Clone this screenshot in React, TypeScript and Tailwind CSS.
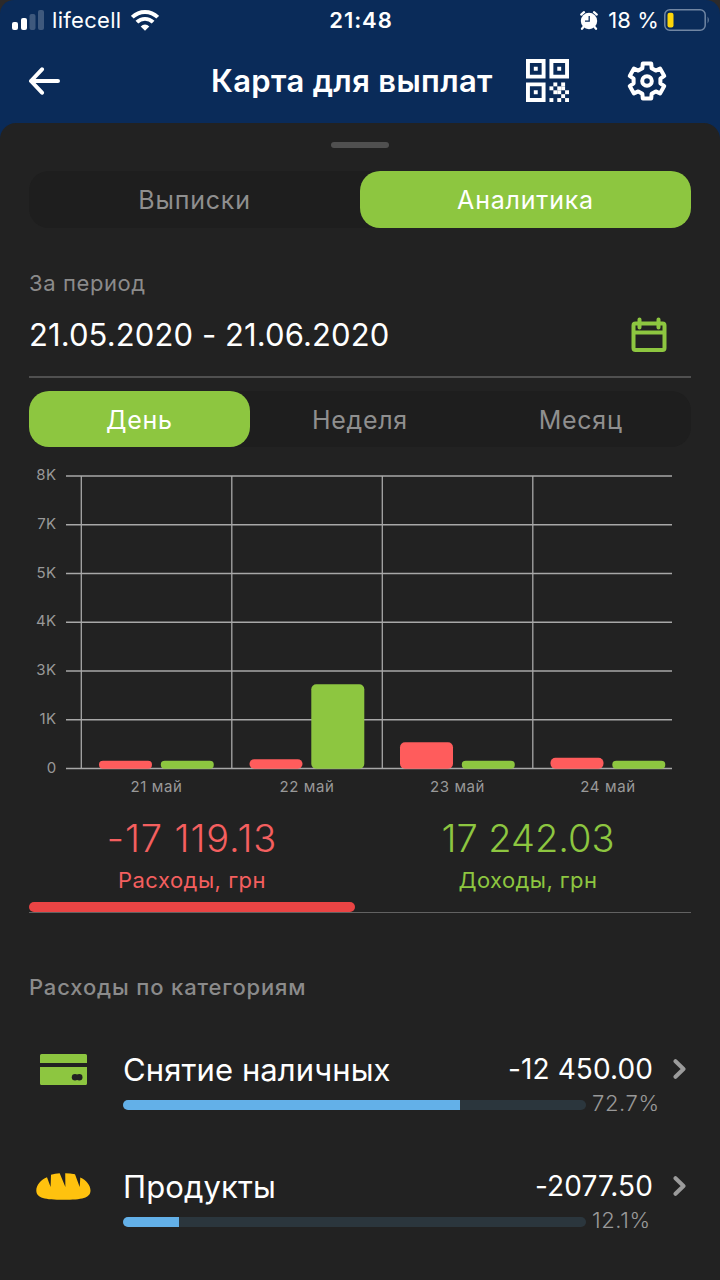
import { useState } from 'react';
import { clsx } from 'clsx';

interface DayStats {
  label: string;
  expense: number;
  income: number;
}

interface Category {
  id: string;
  name: string;
  amount: string;
  percent: number;
  icon: React.ReactNode;
}

// Bar heights in px
const days: DayStats[] = [
  { label: '21 май', expense: 8, income: 8 },
  { label: '22 май', expense: 9.5, income: 84.5 },
  { label: '23 май', expense: 26.5, income: 8 },
  { label: '24 май', expense: 11, income: 8 },
];

const yLabels = ['8K', '7K', '5K', '4K', '3K', '1K', '0'];

function SignalIcon() {
  return (
    <svg width="32" height="20" viewBox="0 0 32 20" fill="#fff">
      <rect x="0" y="12" width="6" height="8" rx="2" />
      <rect x="9" y="8" width="6" height="12" rx="2" />
      <rect x="17.5" y="4" width="6" height="16" rx="2" opacity="0.22" />
      <rect x="26" y="0" width="6" height="20" rx="2" opacity="0.22" />
    </svg>
  );
}

function WifiIcon() {
  return (
    <svg width="28" height="21" viewBox="0 0 28 21" fill="none" stroke="#fff" strokeWidth="3.9">
      <path d="M1.3 7.2a18 18 0 0 1 25.4 0" />
      <path d="M5.9 12.2a11.5 11.5 0 0 1 16.2 0" />
      <path d="M14 20.8l-4.3-4.4a6 6 0 0 1 8.6 0z" fill="#fff" stroke="none" />
    </svg>
  );
}

function AlarmIcon() {
  return (
    <svg width="18" height="19" viewBox="0 0 18 19">
      <circle cx="9" cy="10" r="8.2" fill="#fff" />
      <path d="M1.2 3.6L4 1.2M16.8 3.6L14 1.2M3.4 16L2 17.8M14.6 16L16 17.8" stroke="#fff" strokeWidth="2.2" strokeLinecap="round" />
      <path d="M9.2 5v5.2H5" fill="none" stroke="#0a2b59" strokeWidth="1.3" />
    </svg>
  );
}

function BatteryIcon() {
  return (
    <svg width="46" height="22" viewBox="0 0 46 22">
      <rect x="0.8" y="0.8" width="40.4" height="20.4" rx="5" fill="none" stroke="#7186a3" strokeWidth="1.5" />
      <rect x="3.5" y="3.8" width="6" height="14.6" rx="2" fill="#fdd60a" />
      <path d="M43.6 7.5q2.4 3.5 0 7z" fill="#7186a3" />
    </svg>
  );
}

function BackIcon() {
  return (
    <svg width="32" height="28" viewBox="0 0 32 28" fill="none" stroke="#fff" strokeWidth="4" strokeLinecap="round" strokeLinejoin="round">
      <path d="M30 14H3M14 2.3L3 14l11 11.7" />
    </svg>
  );
}

const qrModules = ['.X.X.', 'X.XX.', '.XX.X', '...X.', 'X.X.X'];

function QrIcon() {
  return (
    <svg width="43" height="43" viewBox="0 0 11 11" fill="none" stroke="#fff" strokeWidth="1">
      <path d="M.5.5h4v4h-4zM6.5.5h4v4h-4zM.5 6.5h4v4h-4z" />
      <path d="M2 2h1v1H2zM8 2h1v1H8zM2 8h1v1H2z" fill="#fff" stroke="none" />
      {qrModules.map((row, y) =>
        row.split('').map((cell, x) =>
          cell === 'X' ? <rect key={`${x}-${y}`} x={6 + x} y={6 + y} width="1" height="1" fill="#fff" stroke="none" /> : null
        )
      )}
    </svg>
  );
}

// Six teeth, each one a base-tip-tip-base run of points
const gearPoints = [0, 60, 120, 180, 240, 300]
  .flatMap((tooth) =>
    [[-20, 13.6], [-13.5, 18], [13.5, 18], [20, 13.6]].map(([offset, radius]) => {
      const angle = ((tooth + offset) * Math.PI) / 180;
      return `${(20 + radius * Math.sin(angle)).toFixed(2)},${(20 - radius * Math.cos(angle)).toFixed(2)}`;
    })
  )
  .join(' ');

function GearIcon() {
  return (
    <svg width="40" height="40" viewBox="0 0 40 40" fill="none" stroke="#fff" strokeWidth="4" strokeLinejoin="round">
      <polygon points={gearPoints} />
      <circle cx="20" cy="20" r="4.8" />
    </svg>
  );
}

function CalendarIcon() {
  return (
    <svg width="36" height="36" viewBox="0 0 36 36" fill="none" stroke="#8dc640" strokeWidth="4">
      <rect x="2.5" y="6.5" width="31" height="26.5" rx="2" />
      <path d="M2.5 15.5h31" />
      <path d="M8.5 2.5v8M27.5 2.5v8" strokeLinecap="round" />
    </svg>
  );
}

function CardIcon() {
  return (
    <svg width="47" height="31" viewBox="0 0 47 31" fill="#8dc640">
      <path d="M1.5 0h44A1.5 1.5 0 0 1 47 1.5V9H0V1.5A1.5 1.5 0 0 1 1.5 0z" />
      <path d="M0 13h47v16.5a1.5 1.5 0 0 1-1.5 1.5h-44A1.5 1.5 0 0 1 0 29.5z" />
      <circle cx="35" cy="23.3" r="3.2" fill="#222" />
      <circle cx="39.3" cy="23.3" r="3.2" fill="#222" />
    </svg>
  );
}

function BreadIcon() {
  return (
    <svg width="55" height="27" viewBox="0 0 55 27" fill="#ffc20e">
      <path d="M11 4.2L14.6 14 15 1.8Q19 .5 23.7.3L29.4 14 29.2.2Q34 .2 39 1.3L43.7 14 44.3 4.5C50 7 54.5 12 54.5 17.5 54.5 25 46 26.8 27.5 26.8S.3 25 .3 17.5C.3 12 5 6.5 11 4.2z" />
    </svg>
  );
}

function ChevronIcon() {
  return (
    <svg width="14" height="22" viewBox="0 0 14 22" fill="none" stroke="#9b9b9b" strokeWidth="4" strokeLinecap="round" strokeLinejoin="round">
      <path d="M2.5 3.2l8 7.8-8 7.8" />
    </svg>
  );
}

const categories: Category[] = [
  { id: 'cash', name: 'Снятие наличных', amount: '-12 450.00', percent: 72.7, icon: <CardIcon /> },
  { id: 'food', name: 'Продукты', amount: '-2077.50', percent: 12.1, icon: <BreadIcon /> },
];

interface SegmentedProps {
  items: string[];
  active: string;
  onChange: (item: string) => void;
  className?: string;
}

function Segmented({ items, active, onChange, className }: SegmentedProps) {
  return (
    <div className={clsx('flex rounded-[20px] bg-[#1e1e1e]', className)}>
      {items.map((item) => (
        <button
          key={item}
          onClick={() => onChange(item)}
          className={clsx(
            'flex-1 rounded-[20px] pt-0.5 text-[25px]',
            item === active ? 'bg-[#8dc640] text-white' : 'text-[#8f8f8f]'
          )}
        >
          {item}
        </button>
      ))}
    </div>
  );
}

function Chart() {
  const rowHeight = 48.75;
  const colWidth = 150.5;

  return (
    <svg width="662" height="340" viewBox="29 460 662 340" className="block" fontSize="15" letterSpacing="0.6">
      {/* Grid */}
      {yLabels.map((label, i) => (
        <g key={label}>
          <text x="56.5" y={480 + i * rowHeight} textAnchor="end" fill="#999" letterSpacing="0.4">
            {label}
          </text>
          <path d={`M66 ${476 + i * rowHeight}H672`} stroke="#a8a8a8" strokeWidth="1.3" />
        </g>
      ))}
      {days.map((day, i) => (
        <path key={day.label} d={`M${81.3 + i * colWidth} 476V768.5`} stroke="#a8a8a8" strokeWidth="1.3" />
      ))}

      {/* Bars */}
      {days.map((day, i) => (
        <g key={day.label}>
          <rect x={99 + i * colWidth} y={768.7 - day.expense} width="53" height={day.expense} rx={Math.min(5, day.expense / 2)} fill="#ff5c5c" />
          <rect x={160.8 + i * colWidth} y={768.7 - day.income} width="53" height={day.income} rx={Math.min(5, day.income / 2)} fill="#8dc640" />
          <text x={156.5 + i * colWidth} y="791.5" textAnchor="middle" fill="#999">
            {day.label}
          </text>
        </g>
      ))}
    </svg>
  );
}

export default function App() {
  const [tab, setTab] = useState('Аналитика');
  const [range, setRange] = useState('День');

  return (
    <div className="h-[1280px] w-[720px] overflow-hidden bg-[#2c2a2a] font-['Inter','Noto_Sans',sans-serif] leading-none">
      <div className="flex h-full flex-col rounded-t-[14px] bg-[#0a2b59]">
        {/* Status bar */}
        <div className="grid h-10 shrink-0 grid-cols-3 items-center pr-[10px] pl-3 text-[22px] text-white">
          <div className="flex items-center">
            <SignalIcon />
            <span className="mr-[10px] ml-2 tracking-[0.3px]">lifecell</span>
            <WifiIcon />
          </div>
          <div className="text-center font-semibold tracking-[0.9px]">21:48</div>
          <div className="flex items-center justify-end">
            <AlarmIcon />
            <span className="mr-[5px] ml-[10px] tracking-[0.1px]">18 %</span>
            <BatteryIcon />
          </div>
        </div>

        {/* Header */}
        <div className="flex h-[83px] shrink-0 items-center pr-[53px] pb-0.5 pl-7">
          <button><BackIcon /></button>
          <h1 className="ml-[151px] flex-1 text-[31px] font-semibold tracking-[0.35px] whitespace-nowrap text-white">
            Карта для выплат
          </h1>
          <button><QrIcon /></button>
          <button className="ml-[58px]"><GearIcon /></button>
        </div>

        {/* Sheet */}
        <div className="flex flex-1 flex-col rounded-t-[16px] bg-[#222] px-[29px]">
          <div className="mx-auto mt-[19px] h-1.5 w-[58px] shrink-0 rounded-full bg-[#505050]" />

          <Segmented
            items={['Выписки', 'Аналитика']}
            active={tab}
            onChange={setTab}
            className="mt-[23px] h-[57px] shrink-0 tracking-[0.8px]"
          />

          <div className="mt-[43px] h-6 text-[22px] leading-6 tracking-[0.6px] text-[#8b8b8b]">За период</div>
          <div className="flex h-[83px] shrink-0 items-center justify-between border-b-2 border-[#505050] pr-6 pb-0.5">
            <span className="text-[31px] tracking-[0.1px] text-white">21.05.2020 - 21.06.2020</span>
            <CalendarIcon />
          </div>

          <Segmented
            items={['День', 'Неделя', 'Месяц']}
            active={range}
            onChange={setRange}
            className="mt-[13px] h-14 shrink-0 tracking-[0.7px]"
          />

          <div className="mt-[13px] h-[340px] shrink-0">
            <Chart />
          </div>

          {/* Totals */}
          <div className="grid shrink-0 grid-cols-2 gap-[10px] border-b border-[#626262] pt-[19px] text-center">
            <div className="flex flex-col">
              <span className="text-[38px] font-[350] tracking-[0.9px] text-[#f45f5f]">-17 119.13</span>
              <span className="mt-3 text-[22px] tracking-[0.5px] text-[#f45f5f]">Расходы, грн</span>
              <span className="mt-[11px] h-2.5 rounded-full bg-[#ea4444]" />
            </div>
            <div className="flex flex-col">
              <span className="text-[38px] font-[350] text-[#8dc640]">17 242.03</span>
              <span className="mt-3 text-[22px] tracking-[0.4px] text-[#8dc640]">Доходы, грн</span>
            </div>
          </div>

          <div className="mt-[62px] text-[22px] leading-6 font-[450] tracking-[0.85px] text-[#8b8b8b]">
            Расходы по категориям
          </div>

          {/* Categories */}
          <div className="mt-[50px] flex flex-col">
            {categories.map((category) => (
              <div key={category.id} className="flex h-[117px] shrink-0">
                <div className="flex h-10 w-[69px] items-center justify-center">{category.icon}</div>
                <div className="ml-[25px] flex-1">
                  <div className="flex h-10 items-center pr-1">
                    <span className="text-[31px] tracking-[0.1px] text-white">{category.name}</span>
                    <span className="mr-5 ml-auto text-[28px] tracking-[0.1px] text-white">{category.amount}</span>
                    <ChevronIcon />
                  </div>
                  <div className="flex h-7 items-center">
                    <div className="mt-1 h-2.5 w-[463px] overflow-hidden rounded-full bg-[#2b363d]">
                      <div className="h-full bg-[#63b0e8]" style={{ width: `${category.percent}%` }} />
                    </div>
                    <span className="ml-1.5 text-[22px] font-[350] tracking-[0.6px] text-[#999]">{category.percent}%</span>
                  </div>
                </div>
              </div>
            ))}
          </div>
        </div>
      </div>
    </div>
  );
}
